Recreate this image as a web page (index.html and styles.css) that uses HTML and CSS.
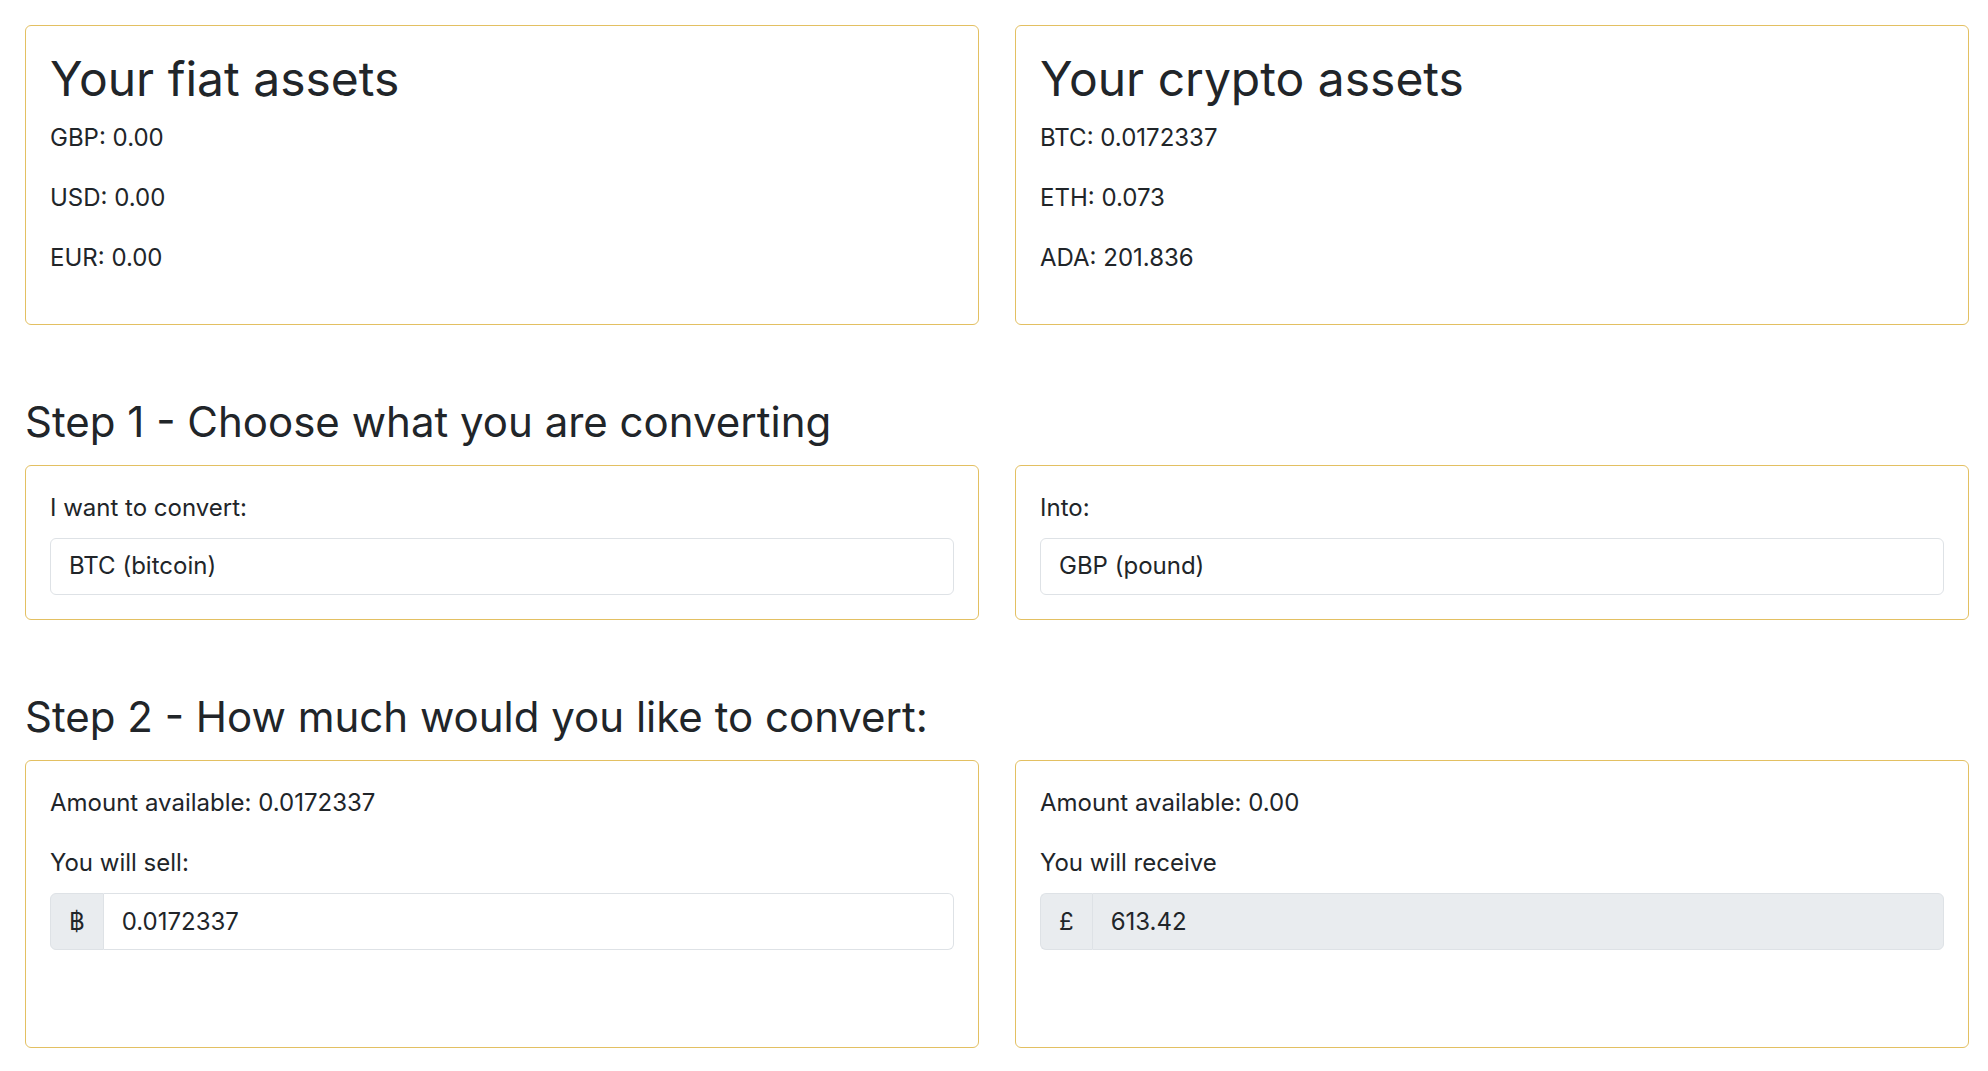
FILE: index.html
```html
<!DOCTYPE html>
<html lang="en">
<head>
<meta charset="utf-8">
<title>Convert</title>
<link rel="stylesheet" href="styles.css">
</head>
<body>
<main class="page">
  <section class="row">
    <div class="card">
      <h2 class="card-title">Your fiat assets</h2>
      <p>GBP: 0.00</p>
      <p>USD: 0.00</p>
      <p>EUR: 0.00</p>
    </div>
    <div class="card">
      <h2 class="card-title">Your crypto assets</h2>
      <p>BTC: 0.0172337</p>
      <p>ETH: 0.073</p>
      <p>ADA: 201.836</p>
    </div>
  </section>

  <h3 class="step">Step 1 - Choose what you are converting</h3>
  <section class="row">
    <div class="card">
      <div class="label">I want to convert:</div>
      <div class="control">BTC (bitcoin)</div>
    </div>
    <div class="card">
      <div class="label">Into:</div>
      <div class="control">GBP (pound)</div>
    </div>
  </section>

  <h3 class="step">Step 2 - How much would you like to convert:</h3>
  <section class="row">
    <div class="card">
      <p>Amount available: 0.0172337</p>
      <div class="label">You will sell:</div>
      <div class="input-group">
        <span class="addon">฿</span>
        <span class="control grouped">0.0172337</span>
      </div>
    </div>
    <div class="card">
      <p>Amount available: 0.00</p>
      <div class="label">You will receive</div>
      <div class="input-group disabled">
        <span class="addon">£</span>
        <span class="control grouped">613.42</span>
      </div>
    </div>
  </section>
</main>
</body>
</html>
```
FILE: styles.css
```css
* { box-sizing: border-box; }
html, body { margin: 0; padding: 0; background: #fff; }
body {
  font-family: Inter, "Noto Sans", "Liberation Sans", sans-serif;
  font-size: 24px;
  line-height: 1.5;
  color: #212529;
}
.page {
  padding: 25px 19px 20px 25px;
}
.row {
  display: grid;
  grid-template-columns: 1fr 1fr;
  column-gap: 36px;
}
.card {
  border: 1px solid #e3c062;
  border-radius: 6px;
  padding: 24px;
  background: #fff;
}
.card-title {
  margin: 0 0 12px;
  font-size: 48px;
  font-weight: 400;
  line-height: 1.2;
}
.card p {
  margin: 0 0 24px;
}
.step {
  margin: 72px 0 18px;
  font-size: 42px;
  font-weight: 400;
  line-height: 1.2;
}
.label {
  margin-bottom: 12px;
}
.control {
  display: block;
  border: 1px solid #dee2e6;
  border-radius: 6px;
  padding: 9.5px 18px;
  line-height: 36px;
  background: #fff;
}
.input-group {
  display: flex;
  margin-bottom: 73px;
}
.addon {
  display: flex;
  align-items: center;
  padding: 9.5px 18px;
  line-height: 36px;
  background: #e9ecef;
  border: 1px solid #dee2e6;
  border-radius: 6px 0 0 6px;
}
.control.grouped {
  flex: 1;
  border-left: none;
  border-radius: 0 6px 6px 0;
}
.input-group.disabled .control.grouped {
  background: #e9ecef;
  border-left: 1px solid #dee2e6;
}
.input-group.disabled .addon {
  border-right: none;
}
```
